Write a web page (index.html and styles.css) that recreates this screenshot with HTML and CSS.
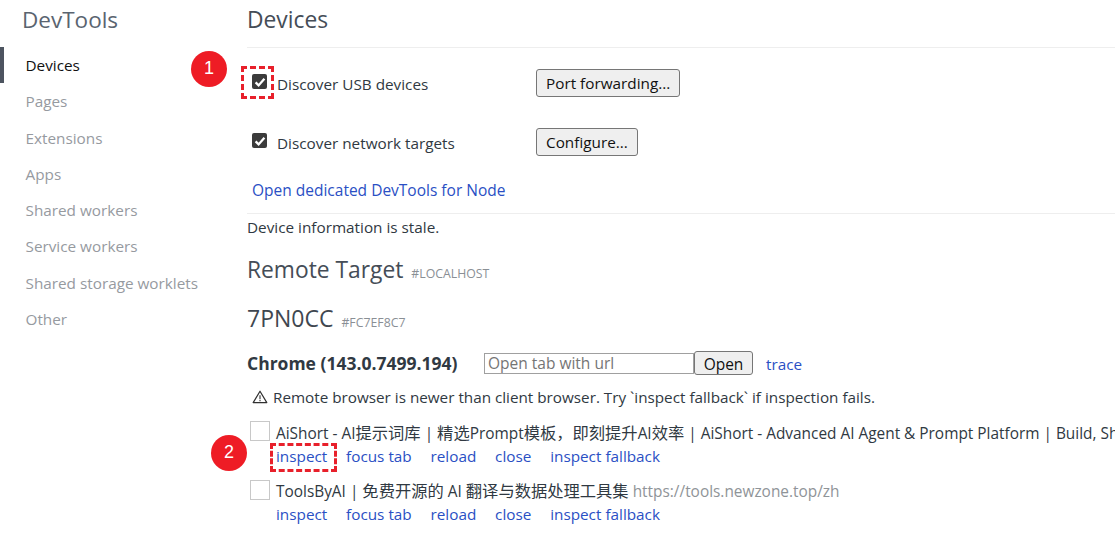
FILE: index.html
```html
<!DOCTYPE html>
<html lang="en">
<head>
<meta charset="utf-8">
<title>DevTools</title>
<link rel="stylesheet" href="styles.css">
</head>
<body>
<div class="app">
  <nav class="sidebar">
    <h1 class="brand">DevTools</h1>
    <ul class="nav">
      <li class="nav-item selected">Devices</li>
      <li class="nav-item">Pages</li>
      <li class="nav-item">Extensions</li>
      <li class="nav-item">Apps</li>
      <li class="nav-item">Shared workers</li>
      <li class="nav-item">Service workers</li>
      <li class="nav-item">Shared storage worklets</li>
      <li class="nav-item">Other</li>
    </ul>
  </nav>
  <main class="content">
    <h2 class="page-title">Devices</h2>
    <section class="options">
      <div class="option option-usb">
        <span class="check-col">
          <span class="check"><svg viewBox="0 0 16 16" width="16" height="16"><path d="M3.6 8.4l3 3 5.8-6.6" fill="none" stroke="#fff" stroke-width="2.3"/></svg></span>
          <span class="dashed dashed-check"></span>
          <span class="badge badge-one">1</span>
        </span>
        <span class="option-label">Discover USB devices</span>
        <button class="btn">Port forwarding...</button>
      </div>
      <div class="option option-net">
        <span class="check-col">
          <span class="check"><svg viewBox="0 0 16 16" width="16" height="16"><path d="M3.6 8.4l3 3 5.8-6.6" fill="none" stroke="#fff" stroke-width="2.3"/></svg></span>
        </span>
        <span class="option-label">Discover network targets</span>
        <button class="btn">Configure...</button>
      </div>
      <a class="link node-link">Open dedicated DevTools for Node</a>
    </section>
    <p class="stale">Device information is stale.</p>
    <h3 class="remote">Remote Target <small class="tag">#LOCALHOST</small></h3>
    <h3 class="device">7PN0CC <small class="tag">#FC7EF8C7</small></h3>
    <div class="browser">
      <strong class="browser-name">Chrome (143.0.7499.194)</strong>
      <input class="url" placeholder="Open tab with url">
      <button class="btn open">Open</button>
      <a class="link trace">trace</a>
    </div>
    <div class="warning">
      <svg class="warn-icon" viewBox="0 0 16 16" width="16" height="16"><path d="M8 2.2L1.2 13.6h13.6z" fill="none" stroke="#303030" stroke-width="1.2" stroke-linejoin="round"/><path d="M8 6.2v4M8 11v1.2" stroke="#303030" stroke-width="1.1" fill="none"/></svg>
      <span>Remote browser is newer than client browser. Try `inspect fallback` if inspection fails.</span>
    </div>
    <div class="target">
      <span class="favicon"></span>
      <div class="target-body">
        <div class="target-title">AiShort - AI<span class="zh">提示词库</span> | <span class="zh">精选</span>Prompt<span class="zh">模板，即刻提升</span>AI<span class="zh">效率</span> | AiShort - Advanced AI Agent &amp; Prompt Platform | Build, Sh</div>
        <div class="actions">
          <a class="link action">inspect<span class="dashed dashed-inspect"></span><span class="badge badge-two">2</span></a>
          <a class="link action">focus tab</a>
          <a class="link action">reload</a>
          <a class="link action">close</a>
          <a class="link action">inspect fallback</a>
        </div>
      </div>
    </div>
    <div class="target">
      <span class="favicon"></span>
      <div class="target-body">
        <div class="target-title">ToolsByAI | <span class="zh">免费开源的</span> AI <span class="zh">翻译与数据处理工具集</span><span class="url-text">https://tools.newzone.top/zh</span></div>
        <div class="actions">
          <a class="link action">inspect</a>
          <a class="link action">focus tab</a>
          <a class="link action">reload</a>
          <a class="link action">close</a>
          <a class="link action">inspect fallback</a>
        </div>
      </div>
    </div>
  </main>
</div>
</body>
</html>
```
FILE: styles.css
```css
* { box-sizing: border-box; }
html, body { margin: 0; height: 100%; overflow: hidden; background: #fff; }
body {
  font-family: "Open Sans", "Noto Sans CJK SC", sans-serif;
  font-size: 15.3px;
  color: #303942;
}
.app { display: flex; height: 535px; width: 1115px; overflow: hidden; }
.sidebar { flex: 0 0 225px; padding-top: 5px; }
.brand {
  margin: 0 0 0 22px;
  font-size: 22.5px;
  font-weight: 400;
  line-height: 29px;
  color: #5a6470;
}
.nav { list-style: none; margin: 13px 0 0; padding: 0; }
.nav-item {
  height: 36.3px;
  line-height: 37px;
  padding-left: 25.5px;
  color: #969a9f;
}
.nav-item.selected { color: #111; border-left: 4px solid #4d5460; padding-left: 21.5px; }
.content { flex: 0 0 890px; padding-left: 22px; }
.page-title {
  margin: 0;
  padding-top: 5px;
  height: 48px;
  border-bottom: 1px solid #eeeeee;
  font-size: 22.8px;
  font-weight: 400;
  line-height: 29px;
  color: #454d57;
}
.options { height: 166px; padding-top: 21px; border-bottom: 1px solid #eeeeee; }
.option { display: flex; align-items: center; height: 30px; }
.option-net { margin-top: 29px; }
.check-col { flex: 0 0 30px; min-width: 0; position: relative; top: -2px; height: 16px; padding-left: 5px; display: block; }
.check { display: block; width: 15px; height: 15px; background: #3b3b3b; border-radius: 2px; }
.check svg { display: block; margin: -0.5px; }
.option-label { flex: 0 0 259px; }
.dashed { position: absolute; border: 3px dashed #e8202b; }
.dashed-check { left: -6px; top: -8px; width: 33px; height: 33px; }
.badge {
  position: absolute;
  width: 36px;
  height: 36px;
  border-radius: 50%;
  background: #ee1c25;
  color: #fff;
  font-size: 18px;
  line-height: 35px;
  text-align: center;
  font-family: "Liberation Sans", sans-serif;
}
.badge-one { left: -56px; top: -23px; }
.btn {
  font-family: inherit;
  font-size: 15.3px;
  color: #111;
  background: #efefef;
  border: 1px solid #767676;
  border-radius: 3px;
  padding: 0 9px;
  height: 28px;
  line-height: 24px;
  margin-top: -3px;
}
.link { color: #2a4fc4; text-decoration: none; }
.node-link { display: block; margin: 22px 0 0 5px; line-height: 20px; font-size: 15.5px; }
.stale { margin: 3px 0 0; line-height: 20px; color: #303942; }
.remote { margin: 18px 0 0; font-size: 22.8px; font-weight: 400; line-height: 29px; color: #454d57; }
.device { margin: 16px 0 0; font-size: 23px; font-weight: 400; line-height: 29px; color: #3f4750; }
.tag { font-size: 12.3px; color: #8a8f95; margin-left: 2px; }
.browser { display: flex; align-items: center; margin-top: 14px; height: 24px; }
.browser-name { flex: 0 0 237px; font-size: 17.5px; font-weight: 700; color: #303942; }
.url {
  width: 210px;
  height: 21px;
  border: 1px solid #a0a0a0;
  padding: 0 3px;
  font-family: inherit;
  font-size: 15.5px;
  margin: 0;
  border-radius: 0;
}
.url::placeholder { color: #757575; opacity: 1; }
.open { width: 59px; height: 24px; padding: 0; margin-top: 0; font-size: 15.5px; }
.trace { margin-left: 13px; margin-top: 2px; }
.warning { display: flex; align-items: center; gap: 5px; margin: 12px 0 0 5px; height: 20px; font-size: 15.25px; }
.target { display: flex; margin-top: 14px; }
.target + .target { margin-top: 12px; }
.favicon { flex: 0 0 20px; height: 20px; margin: 0 6px 0 3px; border: 1px solid #c8c8c8; }
.target + .target .favicon { margin-top: 1px; }
.target-body { white-space: nowrap; min-width: 0; }
.target-title { height: 24px; line-height: 26px; font-size: 15.4px; }
.zh { font-size: 16.3px; line-height: 1; }
.url-text { color: #8f9498; margin-left: 4px; }
.actions { display: flex; gap: 18.8px; line-height: 22px; }
.action { position: relative; display: block; }
.dashed-inspect { left: -6px; top: -2px; right: -10px; bottom: -5px; }
.badge-two { left: -65px; top: -10px; }
```
